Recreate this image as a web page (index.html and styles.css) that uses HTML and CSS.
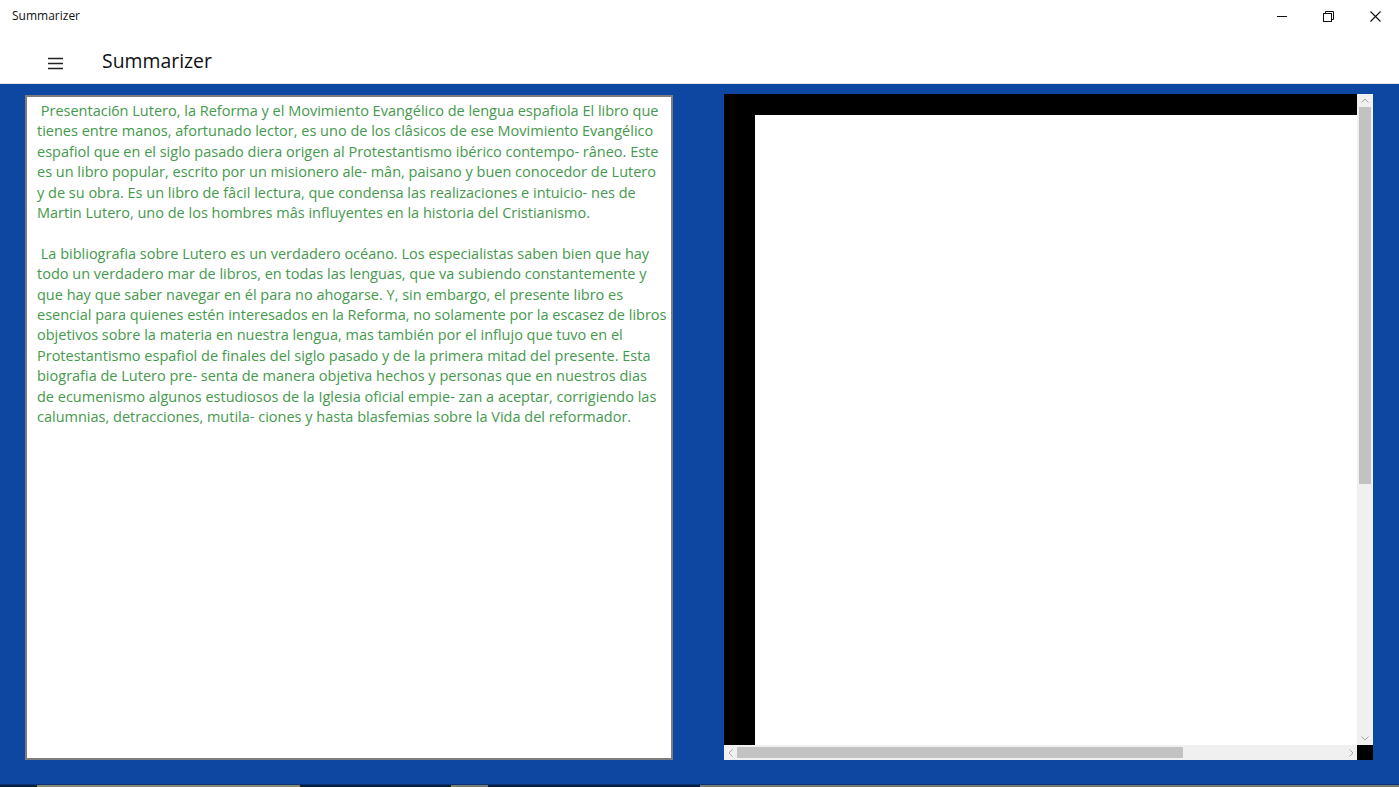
FILE: index.html
```html
<!DOCTYPE html>
<html lang="es">
<head>
<meta charset="utf-8">
<title>Summarizer</title>
<link rel="stylesheet" href="styles.css">
</head>
<body>
<div class="window">
  <div class="titlebar">
    <span class="title">Summarizer</span>
    <div class="controls">
      <div class="ctl">
        <svg width="10" height="10" viewBox="0 0 10 10"><line x1="0" y1="5.5" x2="10" y2="5.5" stroke="#111" stroke-width="1"/></svg>
      </div>
      <div class="ctl">
        <svg width="11" height="11" viewBox="0 0 11 11"><rect x="0.5" y="2.5" width="8" height="8" fill="none" stroke="#111" stroke-width="1"/><path d="M2.5 2.5V0.5H10.5V8.5H8.5" fill="none" stroke="#111" stroke-width="1"/></svg>
      </div>
      <div class="ctl">
        <svg width="11" height="11" viewBox="0 0 11 11"><path d="M0.5 0.5L10.5 10.5M10.5 0.5L0.5 10.5" stroke="#111" stroke-width="1.1"/></svg>
      </div>
    </div>
  </div>
  <div class="appbar">
    <div class="hamburger">
      <svg width="15" height="13" viewBox="0 0 15 13"><path d="M0 1.5H15M0 6.5H15M0 11.5H15" stroke="#222" stroke-width="1.6"/></svg>
    </div>
    <h1 class="apptitle">Summarizer</h1>
  </div>
  <div class="main">
    <div class="textbox">
      <div class="line">&nbsp;Presentaci6n Lutero, la Reforma y el Movimiento Evangélico de lengua espafiola El libro que</div>
      <div class="line">tienes entre manos, afortunado lector, es uno de los clâsicos de ese Movimiento Evangélico</div>
      <div class="line">espafiol que en el siglo pasado diera origen al Protestantismo ibérico contempo- râneo. Este</div>
      <div class="line">es un libro popular, escrito por un misionero ale- mân, paisano y buen conocedor de Lutero</div>
      <div class="line">y de su obra. Es un libro de fâcil lectura, que condensa las realizaciones e intuicio- nes de</div>
      <div class="line">Martin Lutero, uno de los hombres mâs influyentes en la historia del Cristianismo.</div>
      <div class="line">&nbsp;</div>
      <div class="line">&nbsp;La bibliografia sobre Lutero es un verdadero océano. Los especialistas saben bien que hay</div>
      <div class="line">todo un verdadero mar de libros, en todas las lenguas, que va subiendo constantemente y</div>
      <div class="line">que hay que saber navegar en él para no ahogarse. Y, sin embargo, el presente libro es</div>
      <div class="line">esencial para quienes estén interesados en la Reforma, no solamente por la escasez de libros</div>
      <div class="line">objetivos sobre la materia en nuestra lengua, mas también por el influjo que tuvo en el</div>
      <div class="line">Protestantismo espafiol de finales del siglo pasado y de la primera mitad del presente. Esta</div>
      <div class="line">biografia de Lutero pre- senta de manera objetiva hechos y personas que en nuestros dias</div>
      <div class="line">de ecumenismo algunos estudiosos de la Iglesia oficial empie- zan a aceptar, corrigiendo las</div>
      <div class="line">calumnias, detracciones, mutila- ciones y hasta blasfemias sobre la Vida del reformador.</div>
    </div>
    <div class="viewer">
      <div class="viewport">
        <div class="canvas"></div>
      </div>
      <div class="vscroll">
        <div class="arrow up"><svg width="8" height="5" viewBox="0 0 8 5"><path d="M0.5 4.5L4 1L7.5 4.5" fill="none" stroke="#a6a6a6" stroke-width="1"/></svg></div>
        <div class="vtrack"><div class="vthumb"></div></div>
        <div class="arrow down"><svg width="8" height="5" viewBox="0 0 8 5"><path d="M0.5 0.5L4 4L7.5 0.5" fill="none" stroke="#a6a6a6" stroke-width="1"/></svg></div>
      </div>
      <div class="hscroll">
        <div class="harrow"><svg width="5" height="8" viewBox="0 0 5 8"><path d="M4.5 0.5L1 4L4.5 7.5" fill="none" stroke="#a6a6a6" stroke-width="1"/></svg></div>
        <div class="htrack"><div class="hthumb"></div></div>
        <div class="harrow"><svg width="5" height="8" viewBox="0 0 5 8"><path d="M0.5 0.5L4 4L0.5 7.5" fill="none" stroke="#a6a6a6" stroke-width="1"/></svg></div>
      </div>
      <div class="corner"></div>
    </div>
  </div>
  <div class="taskstrip">
    <span class="seg dark s1"></span>
    <span class="seg tan s2"></span>
    <span class="seg dark s3"></span>
    <span class="seg grey s4"></span>
    <span class="seg dark s5"></span>
    <span class="seg grey s6"></span>
  </div>
</div>
</body>
</html>
```

FILE: styles.css
```css
html, body {
  margin: 0;
  padding: 0;
  background: #ffffff;
  overflow: hidden;
}

.window {
  width: 1399px;
  height: 787px;
  display: flex;
  flex-direction: column;
  font-family: "Open Sans", "Noto Sans", sans-serif;
}

.titlebar {
  height: 32px;
  display: flex;
  align-items: center;
  justify-content: space-between;
  background: #ffffff;
}

.title {
  font-size: 12px;
  color: #111;
  padding-left: 12px;
  padding-bottom: 1px;
}

.controls {
  display: flex;
  height: 32px;
}

.ctl {
  width: 47px;
  height: 32px;
  display: flex;
  align-items: center;
  justify-content: center;
}

.appbar {
  height: 51px;
  display: flex;
  align-items: center;
  background: #ffffff;
  border-bottom: 1px solid #e4e4e4;
}

.hamburger {
  width: 15px;
  height: 13px;
  margin-left: 48px;
  margin-top: 12px;
  display: flex;
}

.apptitle {
  margin: 0 0 0 39px;
  font-size: 19.4px;
  font-weight: 400;
  color: #111;
  padding-top: 5px;
}

.main {
  height: 700px;
  background: #0d47a1;
  display: flex;
  align-items: flex-start;
  padding: 10px 0 0 25px;
  box-sizing: border-box;
  gap: 51px;
}

.textbox {
  width: 648px;
  height: 665px;
  margin-top: 1px;
  box-sizing: border-box;
  background: #ffffff;
  border: 2px solid #7d7d7d;
  padding: 4px 0 0 10px;
  color: #45994d;
  font-size: 14.5px;
  line-height: 20.4px;
  overflow: hidden;
}

.line {
  white-space: nowrap;
}

.viewer {
  display: grid;
  grid-template-columns: 633px 16px;
  grid-template-rows: 651px 15px;
}

.viewport {
  background: #000000;
  padding: 21px 0 0 31px;
  box-sizing: border-box;
  display: flex;
}

.canvas {
  flex: 1;
  background: #ffffff;
}

.vscroll {
  background: #f0f0f0;
  display: flex;
  flex-direction: column;
  align-items: center;
}

.arrow {
  height: 13px;
  display: flex;
  align-items: center;
  justify-content: center;
}

.vtrack {
  flex: 1;
  width: 100%;
  display: flex;
  justify-content: center;
}

.vthumb {
  width: 12px;
  height: 377px;
  background: #c2c2c2;
}

.hscroll {
  background: #f0f0f0;
  display: flex;
  align-items: center;
}

.harrow {
  width: 12px;
  display: flex;
  align-items: center;
  justify-content: center;
}

.htrack {
  flex: 1;
  height: 100%;
  display: flex;
  align-items: center;
}

.hthumb {
  width: 446px;
  height: 11px;
  margin-left: 1px;
  background: #c2c2c2;
}

.corner {
  background: #000000;
}

.taskstrip {
  height: 3px;
  display: flex;
  border-top: 1px solid #0a3470;
  box-sizing: border-box;
}

.seg {
  display: block;
  height: 100%;
}

.dark { background: #0b1f44; }
.tan { background: #8c8878; }
.grey { background: #7a7a7a; }

.s1 { width: 37px; }
.s2 { width: 263px; }
.s3 { width: 151px; }
.s4 { width: 37px; }
.s5 { width: 212px; }
.s6 { flex: 1; }
```
